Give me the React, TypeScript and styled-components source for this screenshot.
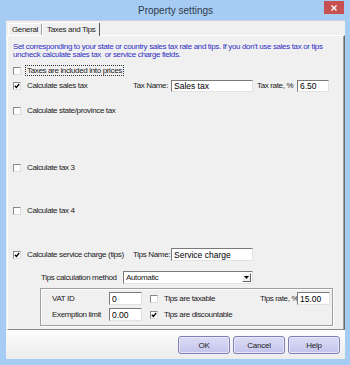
import styled, { createGlobalStyle } from "styled-components";

const GlobalStyle = createGlobalStyle`
  html, body {
    margin: 0;
    padding: 0;
    background: #a7ccf4;
  }
  * {
    box-sizing: border-box;
  }
`;

const Window = styled.div`
  width: 350px;
  height: 365px;
  background: #a7ccf4;
  display: flex;
  flex-direction: column;
  padding: 0 5px 6px 6px;
  font-family: "Liberation Sans", Arial, sans-serif;
  color: #1a1a1a;
`;

const TitleBar = styled.div`
  height: 20px;
  display: grid;
  grid-template-columns: 1fr auto 1fr;
  align-items: center;
`;

const Title = styled.div`
  grid-column: 2;
  font-size: 10px;
  color: #2e3a48;
  padding-top: 1px;
`;

const CloseButton = styled.div`
  grid-column: 3;
  justify-self: end;
  align-self: start;
  margin-top: 1px;
  margin-right: 1px;
  width: 20px;
  height: 13px;
  background: #c75050;
  display: flex;
  align-items: center;
  justify-content: center;
`;

const Client = styled.div`
  flex: 1;
  display: flex;
  flex-direction: column;
  background: #f0f0f0;
  border-top: 1px solid #c9d3df;
`;

const TabStrip = styled.div`
  height: 14px;
  display: flex;
  align-items: flex-end;
  padding-left: 2px;
`;

const Tab = styled.div<{ $active?: boolean }>`
  height: ${(p) => (p.$active ? 14 : 12)}px;
  padding: 0 ${(p) => (p.$active ? 4 : 3)}px;
  display: flex;
  align-items: center;
  font-size: 8px;
  letter-spacing: -0.35px;
  background: #f0f0f0;
  border-top: 1px solid #ffffff;
  border-left: 1px solid #ffffff;
  border-right: 1px solid ${(p) => (p.$active ? "#5a5a5a" : "#a0a0a0")};
  border-radius: 2px 2px 0 0;
  margin-bottom: ${(p) => (p.$active ? -1 : 0)}px;
  position: relative;
  z-index: ${(p) => (p.$active ? 1 : 0)};
`;

const Panel = styled.div`
  height: 295px;
  margin-left: 1px;
  background: #f0f0f0;
  border-top: 1px solid #ffffff;
  border-left: 1px solid #ffffff;
  border-right: 1px solid #6a6a6a;
  border-bottom: 1px solid #8a8a8a;
  box-shadow: inset -1px 0 #a0a0a0;
  padding: 6.5px 6px 0 5px;
  font-size: 8px;
  letter-spacing: -0.35px;
`;

const Description = styled.div`
  color: #2f2fc4;
  line-height: 8.5px;
  white-space: nowrap;
`;

const Row = styled.div<{ $mt?: number }>`
  height: 14px;
  margin-top: ${(p) => p.$mt ?? 0}px;
  display: flex;
  align-items: center;
  white-space: nowrap;
`;

const CheckCell = styled.div<{ $w?: number }>`
  display: flex;
  align-items: center;
  width: ${(p) => (p.$w ? `${p.$w}px` : "auto")};
  flex-shrink: 0;
`;

const Box = styled.span`
  width: 8px;
  height: 8px;
  background: #ffffff;
  border-style: solid;
  border-width: 1px;
  border-color: #8a8a8a #dcdcdc #dcdcdc #8a8a8a;
  display: flex;
  align-items: center;
  justify-content: center;
  flex-shrink: 0;
`;

const CheckText = styled.span<{ $focus?: boolean }>`
  margin-left: 4px;
  padding: 0 1px;
  line-height: 9px;
  border: 1px dotted ${(p) => (p.$focus ? "#333" : "transparent")};
`;

const FieldLabel = styled.span<{ $w: number; $ml?: number }>`
  width: ${(p) => p.$w}px;
  margin-left: ${(p) => p.$ml ?? 0}px;
  flex-shrink: 0;
`;

const Input = styled.div<{ $w: number; $h?: number }>`
  width: ${(p) => p.$w}px;
  height: ${(p) => p.$h ?? 12}px;
  background: #ffffff;
  border-style: solid;
  border-width: 1px;
  border-color: #7a7a7a #e2e2e2 #e2e2e2 #7a7a7a;
  font-size: 8.5px;
  letter-spacing: 0;
  padding-left: 2px;
  display: flex;
  align-items: center;
  flex-shrink: 0;
  color: #000;
`;

const Select = styled.div`
  width: 130px;
  height: 13px;
  background: #ffffff;
  border-style: solid;
  border-width: 1px;
  border-color: #7a7a7a #e2e2e2 #e2e2e2 #7a7a7a;
  display: flex;
  align-items: center;
  justify-content: space-between;
  padding: 0 1px 0 2px;
  flex-shrink: 0;
`;

const DropButton = styled.span`
  width: 9px;
  height: 9px;
  background: #f0f0f0;
  border-style: solid;
  border-width: 1px;
  border-color: #ffffff #6a6a6a #6a6a6a #ffffff;
  display: flex;
  align-items: center;
  justify-content: center;
`;

const Group = styled.div`
  margin-top: 3px;
  margin-left: 27px;
  width: 293px;
  height: 38px;
  border: 1px solid #a0a0a0;
  box-shadow: 1px 1px 0 #ffffff, inset 1px 1px 0 #ffffff;
  padding: 3px 0 0 11px;
  display: flex;
  flex-direction: column;
  gap: 2px;
`;

const ButtonBar = styled.div`
  flex: 1;
  background: linear-gradient(#fdfdfd, #ececec);
  display: flex;
  justify-content: flex-end;
  align-items: flex-start;
  gap: 3px;
  padding: 6px 5px 0 0;
`;

const Button = styled.div`
  width: 52px;
  height: 18px;
  border: 1px solid #7f7fb6;
  border-radius: 3px;
  background: linear-gradient(#dcdcf6, #c4c4ec);
  box-shadow: inset 0 0 0 1px #e8e8fb;
  display: flex;
  align-items: center;
  justify-content: center;
  font-size: 8px;
  letter-spacing: -0.2px;
  color: #222;
`;

function Check({
  checked,
  label,
  focus,
  width,
}: {
  checked?: boolean;
  label: string;
  focus?: boolean;
  width?: number;
}) {
  return (
    <CheckCell $w={width}>
      <Box>
        {checked && (
          <svg width="6" height="6" viewBox="0 0 7 7">
            <path d="M1 3.2 L2.8 5.2 L6 1.2" fill="none" stroke="#000" strokeWidth="1.6" />
          </svg>
        )}
      </Box>
      <CheckText $focus={focus}>{label}</CheckText>
    </CheckCell>
  );
}

export default function App() {
  return (
    <>
      <GlobalStyle />
      <Window>
        <TitleBar>
          <Title>Property settings</Title>
          <CloseButton>
            <svg width="6" height="6" viewBox="0 0 6 6">
              <path d="M0.5 0.5 L5.5 5.5 M5.5 0.5 L0.5 5.5" stroke="#fff" strokeWidth="1.4" />
            </svg>
          </CloseButton>
        </TitleBar>
        <Client>
          <TabStrip>
            <Tab>General</Tab>
            <Tab $active>Taxes and Tips</Tab>
          </TabStrip>
          <Panel>
            <Description>
              <div>
                Set corresponding to your state or country sales tax rate and tips. If you don't use sales tax or tips
              </div>
              <div>uncheck calculate sales tax&nbsp; or service charge fields.</div>
            </Description>
            <Row $mt={4}>
              <Check label="Taxes are included into prices" focus />
            </Row>
            <Row $mt={1}>
              <Check checked label="Calculate sales tax" width={120} />
              <FieldLabel $w={38}>Tax Name:</FieldLabel>
              <Input $w={82}>Sales tax</Input>
              <FieldLabel $w={40} $ml={4}>
                Tax rate, %
              </FieldLabel>
              <Input $w={32}>6.50</Input>
            </Row>
            <Row $mt={11}>
              <Check label="Calculate state/province tax" />
            </Row>
            <Row $mt={43}>
              <Check label="Calculate tax 3" />
            </Row>
            <Row $mt={29}>
              <Check label="Calculate tax 4" />
            </Row>
            <Row $mt={30}>
              <Check checked label="Calculate service charge (tips)" width={120} />
              <FieldLabel $w={38}>Tips Name:</FieldLabel>
              <Input $w={82} $h={13}>
                Service charge
              </Input>
            </Row>
            <Row $mt={9}>
              <FieldLabel $w={82} $ml={28}>
                Tips calculation method
              </FieldLabel>
              <Select>
                <span>Automatic</span>
                <DropButton>
                  <svg width="5" height="3" viewBox="0 0 5 3">
                    <path d="M0 0 L5 0 L2.5 3 Z" fill="#000" />
                  </svg>
                </DropButton>
              </Select>
            </Row>
            <Group>
              <Row>
                <FieldLabel $w={57}>VAT ID</FieldLabel>
                <Input $w={33} $h={13}>
                  0
                </Input>
                <FieldLabel $w={8} />
                <Check label="Tips are taxable" width={110} />
                <FieldLabel $w={37}>Tips rate, %</FieldLabel>
                <Input $w={33} $h={13}>
                  15.00
                </Input>
              </Row>
              <Row>
                <FieldLabel $w={57}>Exemption limit</FieldLabel>
                <Input $w={33} $h={13}>
                  0.00
                </Input>
                <FieldLabel $w={8} />
                <Check checked label="Tips are discountable" width={110} />
              </Row>
            </Group>
          </Panel>
          <ButtonBar>
            <Button>OK</Button>
            <Button>Cancel</Button>
            <Button>Help</Button>
          </ButtonBar>
        </Client>
      </Window>
    </>
  );
}
